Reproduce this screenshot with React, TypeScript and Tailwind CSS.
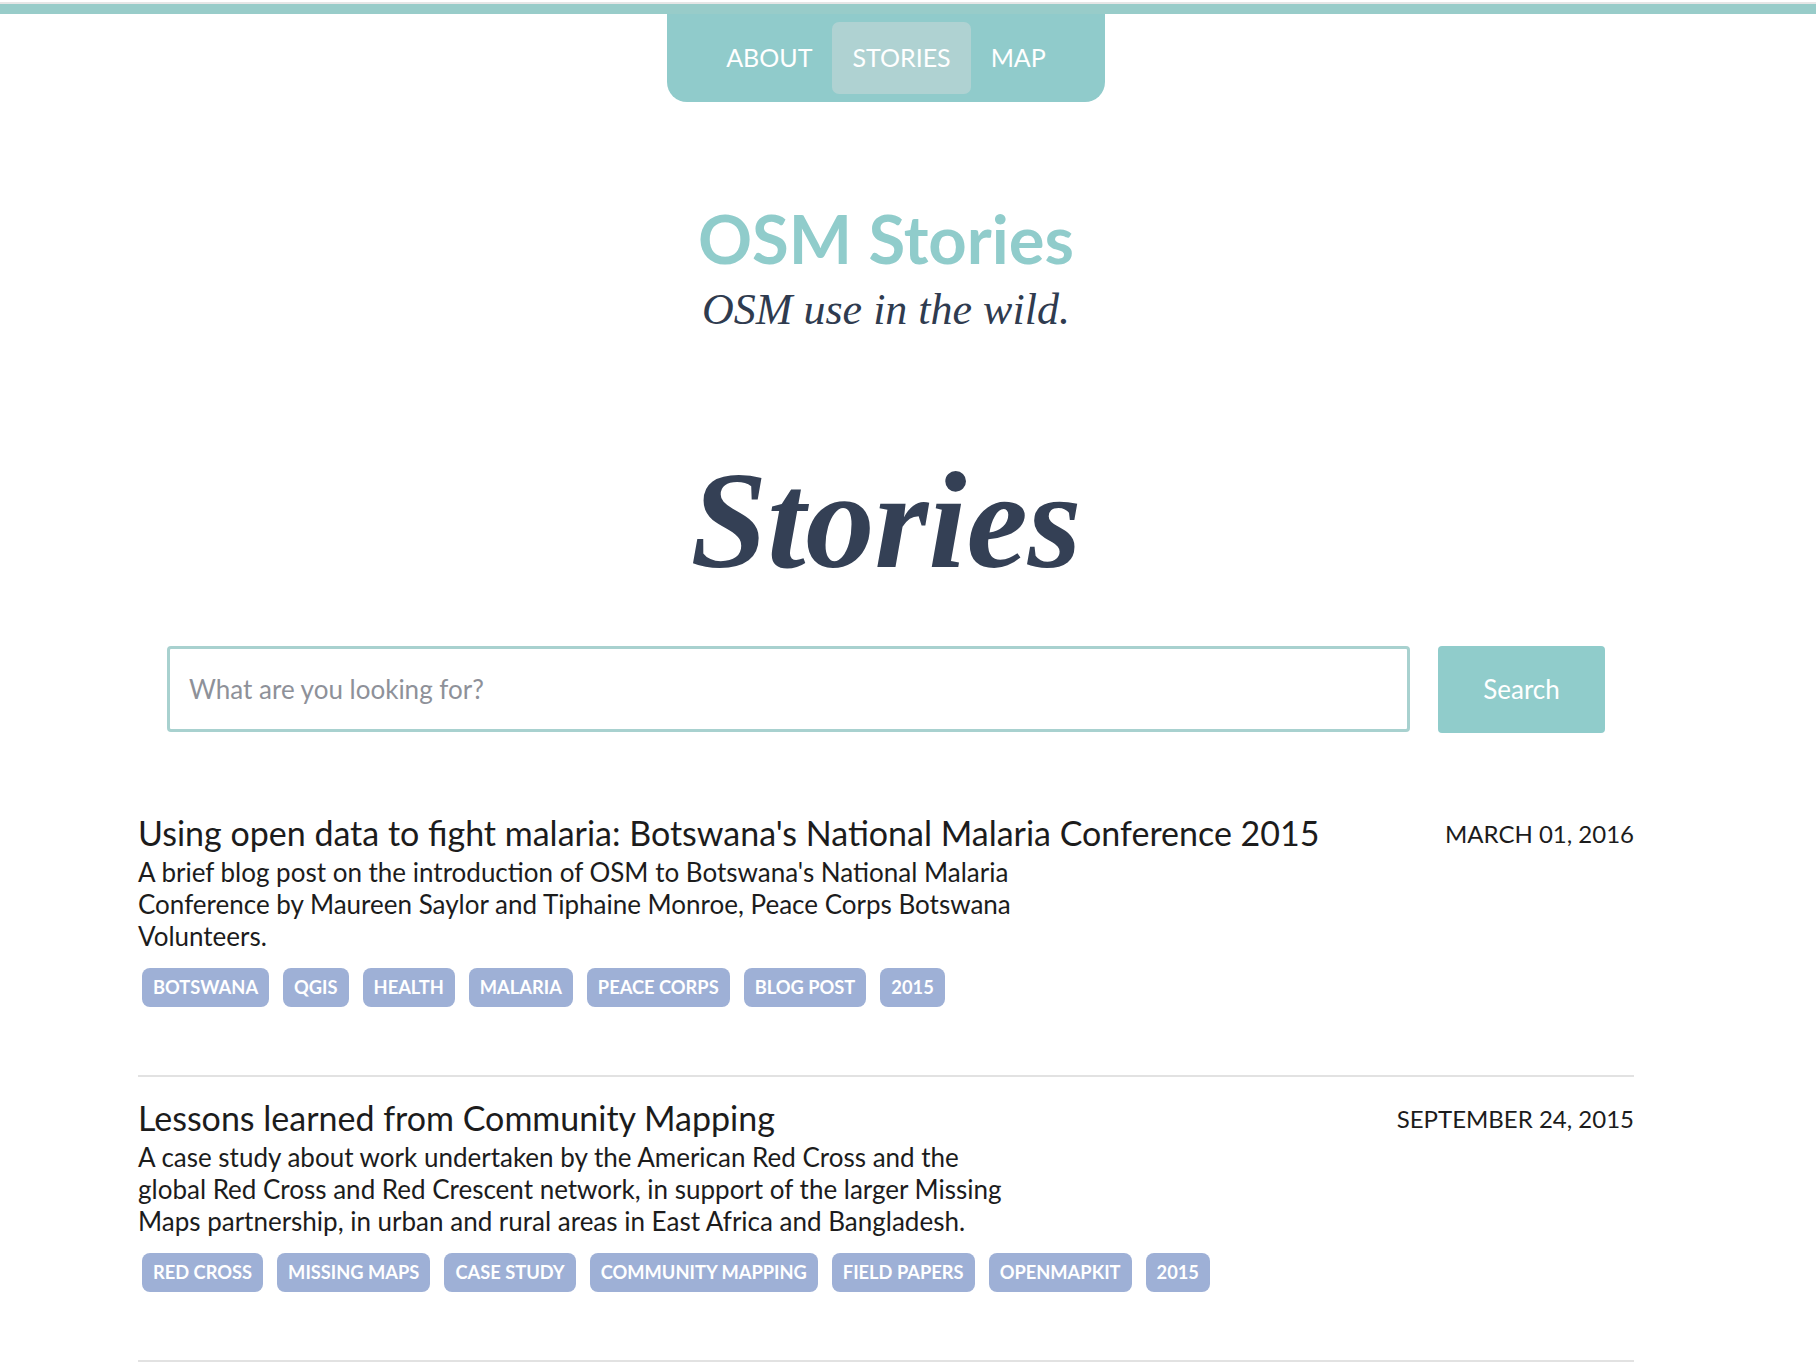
import React from 'react'

const sans = { fontFamily: 'Lato, "Open Sans", sans-serif' }
const serif = { fontFamily: '"Liberation Serif", serif' }

interface Story {
  title: string
  date: string
  // description lines, broken where the original page wraps them
  description: string[]
  tags: string[]
}

const stories: Story[] = [
  {
    title:
      "Using open data to fight malaria: Botswana's National Malaria Conference 2015",
    date: 'March 01, 2016',
    description: [
      "A brief blog post on the introduction of OSM to Botswana's National Malaria",
      'Conference by Maureen Saylor and Tiphaine Monroe, Peace Corps Botswana',
      'Volunteers.',
    ],
    tags: ['Botswana', 'QGIS', 'Health', 'Malaria', 'Peace Corps', 'Blog Post', '2015'],
  },
  {
    title: 'Lessons learned from Community Mapping',
    date: 'September 24, 2015',
    description: [
      'A case study about work undertaken by the American Red Cross and the',
      'global Red Cross and Red Crescent network, in support of the larger Missing',
      'Maps partnership, in urban and rural areas in East Africa and Bangladesh.',
    ],
    tags: [
      'Red Cross',
      'Missing Maps',
      'Case Study',
      'Community Mapping',
      'Field Papers',
      'OpenMapKit',
      '2015',
    ],
  },
]

const NavItem = ({ label, active }: { label: string; active?: boolean }) => (
  <a
    href="#"
    className={`flex h-[72px] items-center rounded-[7px] px-[20px] text-[25px] uppercase text-white ${
      active ? 'bg-[#afd2d2]' : ''
    }`}
  >
    {label}
  </a>
)

const StoryItem = ({ story, first }: { story: Story; first?: boolean }) => (
  <li className={`border-b-2 border-[#e2e2e2] pb-[68px] ${first ? 'pt-[26px]' : 'pt-[24px]'}`}>
    <div className="flex items-start justify-between">
      <h3 className="text-[34px] leading-none text-[#1c1c1c]">{story.title}</h3>
      <span className="mt-[6px] text-[24px] uppercase leading-none text-[#1c1c1c]">
        {story.date}
      </span>
    </div>
    {/* Description */}
    <p className="mt-[6px] text-[26px] leading-[32px] text-[#1c1c1c]">
      {story.description.map((line) => (
        <span key={line} className="block whitespace-nowrap">
          {line}
        </span>
      ))}
    </p>
    {/* Tags */}
    <div className="mt-[16px] flex gap-[14px] pl-[4px]">
      {story.tags.map((tag) => (
        <span
          key={tag}
          className="flex h-[39px] items-center rounded-[8px] bg-[#9eb0d6] px-[11px] text-[18.3px] font-bold uppercase text-white"
        >
          {tag}
        </span>
      ))}
    </div>
  </li>
)

export default function App() {
  return (
    <div className="min-h-screen bg-white" style={sans}>
      {/* Top bar */}
      <div className="mt-[2px] h-[12px] border-t-2 border-[#e6e6e6] bg-[#98ccc9]" />

      <div className="w-[1772px]">
        {/* Navigation tab */}
        <nav className="flex justify-center">
          <div className="flex h-[88px] items-start rounded-b-[20px] bg-[#90cbcb] px-[39px] pt-[8px]">
            <NavItem label="About" />
            <NavItem label="Stories" active />
            <NavItem label="Map" />
          </div>
        </nav>

        {/* Header */}
        <header className="mt-[103px] flex flex-col items-center">
          <h1 className="text-[67px] font-bold leading-none text-[#90cccb]">OSM Stories</h1>
          <p className="mt-[16px] text-[44px] italic leading-none text-[#2f3b4f]" style={serif}>
            OSM use in the wild.
          </p>
        </header>

        <h2
          className="mt-[120px] text-center text-[138px] font-bold italic leading-none text-[#344055]"
          style={serif}
        >
          Stories
        </h2>

        <main className="px-[138px]">
          {/* Search */}
          <form className="mt-[56px] flex gap-[28px] px-[29px]">
            <input
              type="text"
              placeholder="What are you looking for?"
              className="h-[86px] flex-1 rounded-[4px] border-[3px] border-[#a8d1cf] px-[19px] text-[26px] text-[#333] outline-none placeholder:text-[#8e9199]"
            />
            <button
              type="button"
              className="h-[87px] w-[167px] rounded-[4px] bg-[#90cccb] text-[26px] text-white"
            >
              Search
            </button>
          </form>

          {/* Story list */}
          <ul className="mt-[57px]">
            {stories.map((story, i) => (
              <StoryItem key={story.title} story={story} first={i === 0} />
            ))}
          </ul>
        </main>
      </div>
    </div>
  )
}
